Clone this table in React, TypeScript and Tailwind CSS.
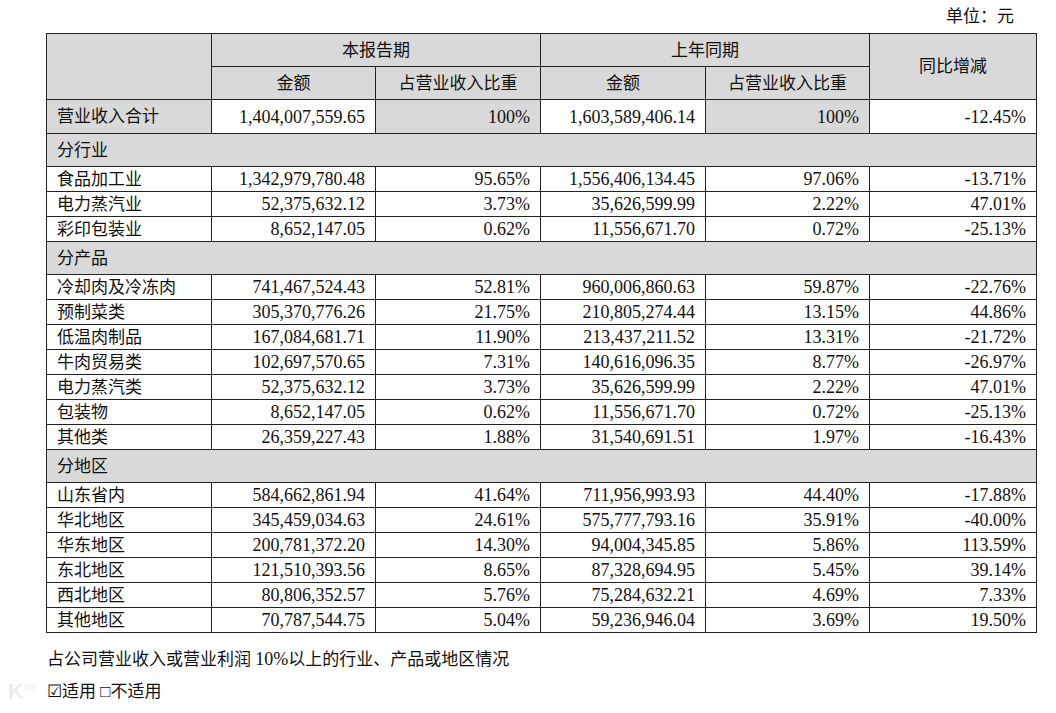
import React from "react";

type Row =
  | { kind: "section"; label: string }
  | { kind: "data"; label: string; a: string; ap: string; b: string; bp: string; c: string };

const rows: Row[] = [
  { kind: "section", label: "分行业" },
  { kind: "data", label: "食品加工业", a: "1,342,979,780.48", ap: "95.65%", b: "1,556,406,134.45", bp: "97.06%", c: "-13.71%" },
  { kind: "data", label: "电力蒸汽业", a: "52,375,632.12", ap: "3.73%", b: "35,626,599.99", bp: "2.22%", c: "47.01%" },
  { kind: "data", label: "彩印包装业", a: "8,652,147.05", ap: "0.62%", b: "11,556,671.70", bp: "0.72%", c: "-25.13%" },
  { kind: "section", label: "分产品" },
  { kind: "data", label: "冷却肉及冷冻肉", a: "741,467,524.43", ap: "52.81%", b: "960,006,860.63", bp: "59.87%", c: "-22.76%" },
  { kind: "data", label: "预制菜类", a: "305,370,776.26", ap: "21.75%", b: "210,805,274.44", bp: "13.15%", c: "44.86%" },
  { kind: "data", label: "低温肉制品", a: "167,084,681.71", ap: "11.90%", b: "213,437,211.52", bp: "13.31%", c: "-21.72%" },
  { kind: "data", label: "牛肉贸易类", a: "102,697,570.65", ap: "7.31%", b: "140,616,096.35", bp: "8.77%", c: "-26.97%" },
  { kind: "data", label: "电力蒸汽类", a: "52,375,632.12", ap: "3.73%", b: "35,626,599.99", bp: "2.22%", c: "47.01%" },
  { kind: "data", label: "包装物", a: "8,652,147.05", ap: "0.62%", b: "11,556,671.70", bp: "0.72%", c: "-25.13%" },
  { kind: "data", label: "其他类", a: "26,359,227.43", ap: "1.88%", b: "31,540,691.51", bp: "1.97%", c: "-16.43%" },
  { kind: "section", label: "分地区" },
  { kind: "data", label: "山东省内", a: "584,662,861.94", ap: "41.64%", b: "711,956,993.93", bp: "44.40%", c: "-17.88%" },
  { kind: "data", label: "华北地区", a: "345,459,034.63", ap: "24.61%", b: "575,777,793.16", bp: "35.91%", c: "-40.00%" },
  { kind: "data", label: "华东地区", a: "200,781,372.20", ap: "14.30%", b: "94,004,345.85", bp: "5.86%", c: "113.59%" },
  { kind: "data", label: "东北地区", a: "121,510,393.56", ap: "8.65%", b: "87,328,694.95", bp: "5.45%", c: "39.14%" },
  { kind: "data", label: "西北地区", a: "80,806,352.57", ap: "5.76%", b: "75,284,632.21", bp: "4.69%", c: "7.33%" },
  { kind: "data", label: "其他地区", a: "70,787,544.75", ap: "5.04%", b: "59,236,946.04", bp: "3.69%", c: "19.50%" },
];

const cell = "border border-[#222] px-[10px] py-0 leading-none";
const num = "border border-[#222] px-[10px] py-0 leading-none text-right text-[18px]";
const gray = "bg-[#d9d9d9]";

export default function App() {
  return (
    <div
      className="w-[1056px] h-[713px] bg-white text-[#111] text-[17px] overflow-hidden"
      style={{ fontFamily: '"Liberation Serif", "Noto Sans CJK SC", serif' }}
    >
      <div className="h-[33px] flex items-center justify-end pr-[42px] pt-[1px]">单位：元</div>
      <table className="ml-[46px] w-[990px] table-fixed border-collapse">
        <colgroup>
          <col className="w-[165px]" />
          <col className="w-[164px]" />
          <col className="w-[165px]" />
          <col className="w-[165px]" />
          <col className="w-[164px]" />
          <col className="w-[167px]" />
        </colgroup>
        <tbody>
          <tr className="h-[33px]">
            <td rowSpan={2} className={`${cell} ${gray}`}></td>
            <td colSpan={2} className={`${cell} ${gray} text-center`}>本报告期</td>
            <td colSpan={2} className={`${cell} ${gray} text-center`}>上年同期</td>
            <td rowSpan={2} className={`${cell} ${gray} text-center`}>同比增减</td>
          </tr>
          <tr className="h-[33px]">
            <td className={`${cell} ${gray} text-center`}>金额</td>
            <td className={`${cell} ${gray} text-center`}>占营业收入比重</td>
            <td className={`${cell} ${gray} text-center`}>金额</td>
            <td className={`${cell} ${gray} text-center`}>占营业收入比重</td>
          </tr>
          <tr className="h-[34px]">
            <td className={`${cell} ${gray}`}>营业收入合计</td>
            <td className={num}>1,404,007,559.65</td>
            <td className={`${num} ${gray}`}>100%</td>
            <td className={num}>1,603,589,406.14</td>
            <td className={`${num} ${gray}`}>100%</td>
            <td className={num}>-12.45%</td>
          </tr>
          {rows.map((r, i) =>
            r.kind === "section" ? (
              <tr key={i} className="h-[33px]">
                <td colSpan={6} className={`${cell} ${gray}`}>{r.label}</td>
              </tr>
            ) : (
              <tr key={i} className="h-[25px]">
                <td className={cell}>{r.label}</td>
                <td className={num}>{r.a}</td>
                <td className={num}>{r.ap}</td>
                <td className={num}>{r.b}</td>
                <td className={num}>{r.bp}</td>
                <td className={num}>{r.c}</td>
              </tr>
            )
          )}
        </tbody>
      </table>
      <div className="relative pl-[47px]">
        <div className="mt-[16px] h-[20px] leading-[20px]">
          占公司营业收入或营业利润 <span className="text-[18px]">10%</span>以上的行业、产品或地区情况
        </div>
        <div className="mt-[13px] h-[20px] leading-[20px]">☑适用 □不适用</div>
        <div className="absolute left-[8px] top-[31px] h-[24px] flex items-start opacity-70 pointer-events-none">
          <span className="text-[22px] leading-[24px] text-[#e6e6e6] font-bold" style={{ fontFamily: '"Liberation Sans", sans-serif' }}>K</span>
          <span className="text-[10px] leading-none text-[#e6e6e6] mt-[2px]" style={{ fontFamily: '"Liberation Sans", sans-serif' }}>oo</span>
        </div>
      </div>
    </div>
  );
}
